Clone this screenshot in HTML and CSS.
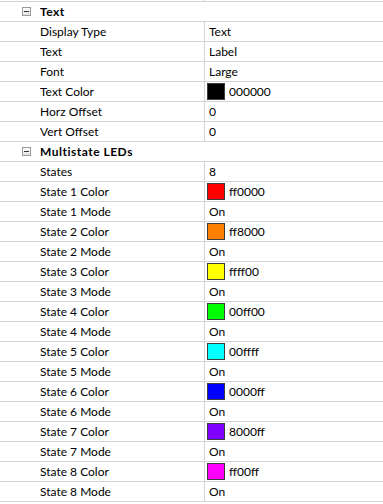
FILE: index.html
```html
<!DOCTYPE html>
<html lang="en">
<head>
    <meta charset="UTF-8">
    <title>Properties</title>
    <link rel="stylesheet" href="styles.css">
</head>
<body>
    <div class="grid">
        <div class="row clipped"><span class="name"></span><span class="value"></span></div>

        <div class="row category"><span class="toggle"></span><span class="title">Text</span></div>
        <div class="row"><span class="name">Display Type</span><span class="value">Text</span></div>
        <div class="row"><span class="name">Text</span><span class="value">Label</span></div>
        <div class="row"><span class="name">Font</span><span class="value">Large</span></div>
        <div class="row"><span class="name">Text Color</span><span class="value"><i class="swatch" style="background:#000000"></i>000000</span></div>
        <div class="row"><span class="name">Horz Offset</span><span class="value">0</span></div>
        <div class="row"><span class="name">Vert Offset</span><span class="value">0</span></div>

        <div class="row category"><span class="toggle"></span><span class="title">Multistate LEDs</span></div>
        <div class="row"><span class="name">States</span><span class="value">8</span></div>
        <div class="row"><span class="name">State 1 Color</span><span class="value"><i class="swatch" style="background:#ff0000"></i>ff0000</span></div>
        <div class="row"><span class="name">State 1 Mode</span><span class="value">On</span></div>
        <div class="row"><span class="name">State 2 Color</span><span class="value"><i class="swatch" style="background:#ff8000"></i>ff8000</span></div>
        <div class="row"><span class="name">State 2 Mode</span><span class="value">On</span></div>
        <div class="row"><span class="name">State 3 Color</span><span class="value"><i class="swatch" style="background:#ffff00"></i>ffff00</span></div>
        <div class="row"><span class="name">State 3 Mode</span><span class="value">On</span></div>
        <div class="row"><span class="name">State 4 Color</span><span class="value"><i class="swatch" style="background:#00ff00"></i>00ff00</span></div>
        <div class="row"><span class="name">State 4 Mode</span><span class="value">On</span></div>
        <div class="row"><span class="name">State 5 Color</span><span class="value"><i class="swatch" style="background:#00ffff"></i>00ffff</span></div>
        <div class="row"><span class="name">State 5 Mode</span><span class="value">On</span></div>
        <div class="row"><span class="name">State 6 Color</span><span class="value"><i class="swatch" style="background:#0000ff"></i>0000ff</span></div>
        <div class="row"><span class="name">State 6 Mode</span><span class="value">On</span></div>
        <div class="row"><span class="name">State 7 Color</span><span class="value"><i class="swatch" style="background:#8000ff"></i>8000ff</span></div>
        <div class="row"><span class="name">State 7 Mode</span><span class="value">On</span></div>
        <div class="row"><span class="name">State 8 Color</span><span class="value"><i class="swatch" style="background:#ff00ff"></i>ff00ff</span></div>
        <div class="row"><span class="name">State 8 Mode</span><span class="value">On</span></div>
    </div>
</body>
</html>
```

FILE: styles.css
```css
body {
    margin: 0;
    padding: 0;
    background-color: #fff;
    font-family: Lato, "Noto Sans", sans-serif;
    font-size: 12px;
    color: #000;
    overflow: hidden;
}

.grid {
    margin-top: -18px;
}

.row {
    display: flex;
    height: 20px;
    box-sizing: border-box;
    border-bottom: 1px solid #d3d3d3;
    line-height: 19px;
    white-space: nowrap;
}

.name {
    width: 164px;
    padding-left: 40px;
    border-right: 1px solid #d3d3d3;
}

.value {
    flex: 1;
    display: flex;
    align-items: center;
    padding-left: 4px;
}

.category {
    align-items: center;
}

.category .title {
    margin-left: 9px;
    font-size: 12px;
    font-weight: bold;
    letter-spacing: 0.5px;
}

.toggle {
    position: relative;
    width: 7px;
    height: 7px;
    margin-left: 22px;
    border: 1px solid #9a9a9a;
    background: linear-gradient(#fdfdfd, #e2e2e2);
}

.toggle::after {
    content: "";
    position: absolute;
    left: 1px;
    top: 3px;
    width: 5px;
    height: 1px;
    background-color: #333;
}

.swatch {
    display: inline-block;
    width: 16px;
    height: 15px;
    margin-left: -2px;
    margin-right: 4px;
    border: 1px solid #3c3c3c;
}
```
